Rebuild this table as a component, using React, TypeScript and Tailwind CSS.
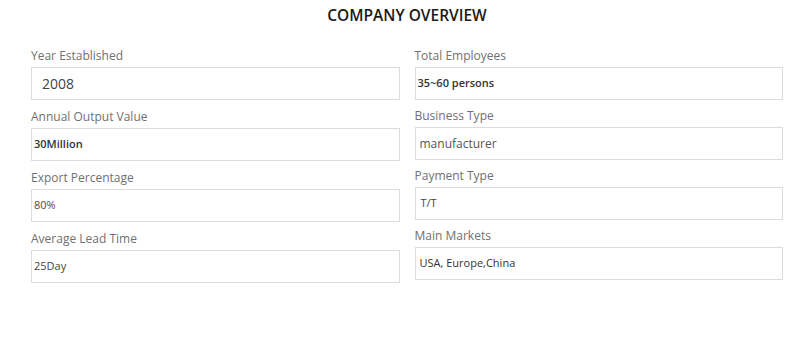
import React from "react";

type Item = { label: string; value: string; cls: string };

const left: Item[] = [
  { label: "Year Established", value: "2008", cls: "text-[14px] text-[#444] pl-[10px]" },
  { label: "Annual Output Value", value: "30Million", cls: "text-[11px] font-semibold text-[#333] pl-[2px]" },
  { label: "Export Percentage", value: "80%", cls: "text-[11px] text-[#5b4636] pl-[2px]" },
  { label: "Average Lead Time", value: "25Day", cls: "text-[11px] text-[#444] pl-[2px]" },
];

const right: Item[] = [
  { label: "Total Employees", value: "35~60 persons", cls: "text-[11px] font-semibold text-[#333] pl-[2px]" },
  { label: "Business Type", value: "manufacturer", cls: "text-[12px] text-[#555] pl-[4px]" },
  { label: "Payment Type", value: "T/T", cls: "text-[11px] text-[#444] pl-[5px]" },
  { label: "Main Markets", value: "USA, Europe,China", cls: "text-[11px] font-medium text-[#333] pl-[4px]" },
];

function Group({ item }: { item: Item }) {
  return (
    <div className="flex flex-col">
      <div className="h-[21px] leading-[21px] text-[12px] text-[#707070]">{item.label}</div>
      <div className="mt-[1px] h-[33px] border border-[#dcdcdc] bg-white flex items-center">
        <span className={item.cls}>{item.value}</span>
      </div>
    </div>
  );
}

export default function App() {
  return (
    <div
      className="w-[800px] h-[350px] bg-white overflow-hidden"
      style={{ fontFamily: '"Open Sans", "Liberation Sans", sans-serif' }}
    >
      <div className="pl-[31px] pr-[17px]">
        <div className="h-[30px] pt-[4px] text-center text-[15.5px] leading-[22px] font-semibold text-[#1a1a1a]">
          COMPANY OVERVIEW
        </div>
        <div className="mt-[15px] grid grid-cols-2 gap-x-[15px]">
          <div className="flex flex-col gap-[6px]">
            {left.map((it) => (
              <Group key={it.label} item={it} />
            ))}
          </div>
          <div className="flex flex-col gap-[5px]">
            {right.map((it) => (
              <Group key={it.label} item={it} />
            ))}
          </div>
        </div>
      </div>
    </div>
  );
}
